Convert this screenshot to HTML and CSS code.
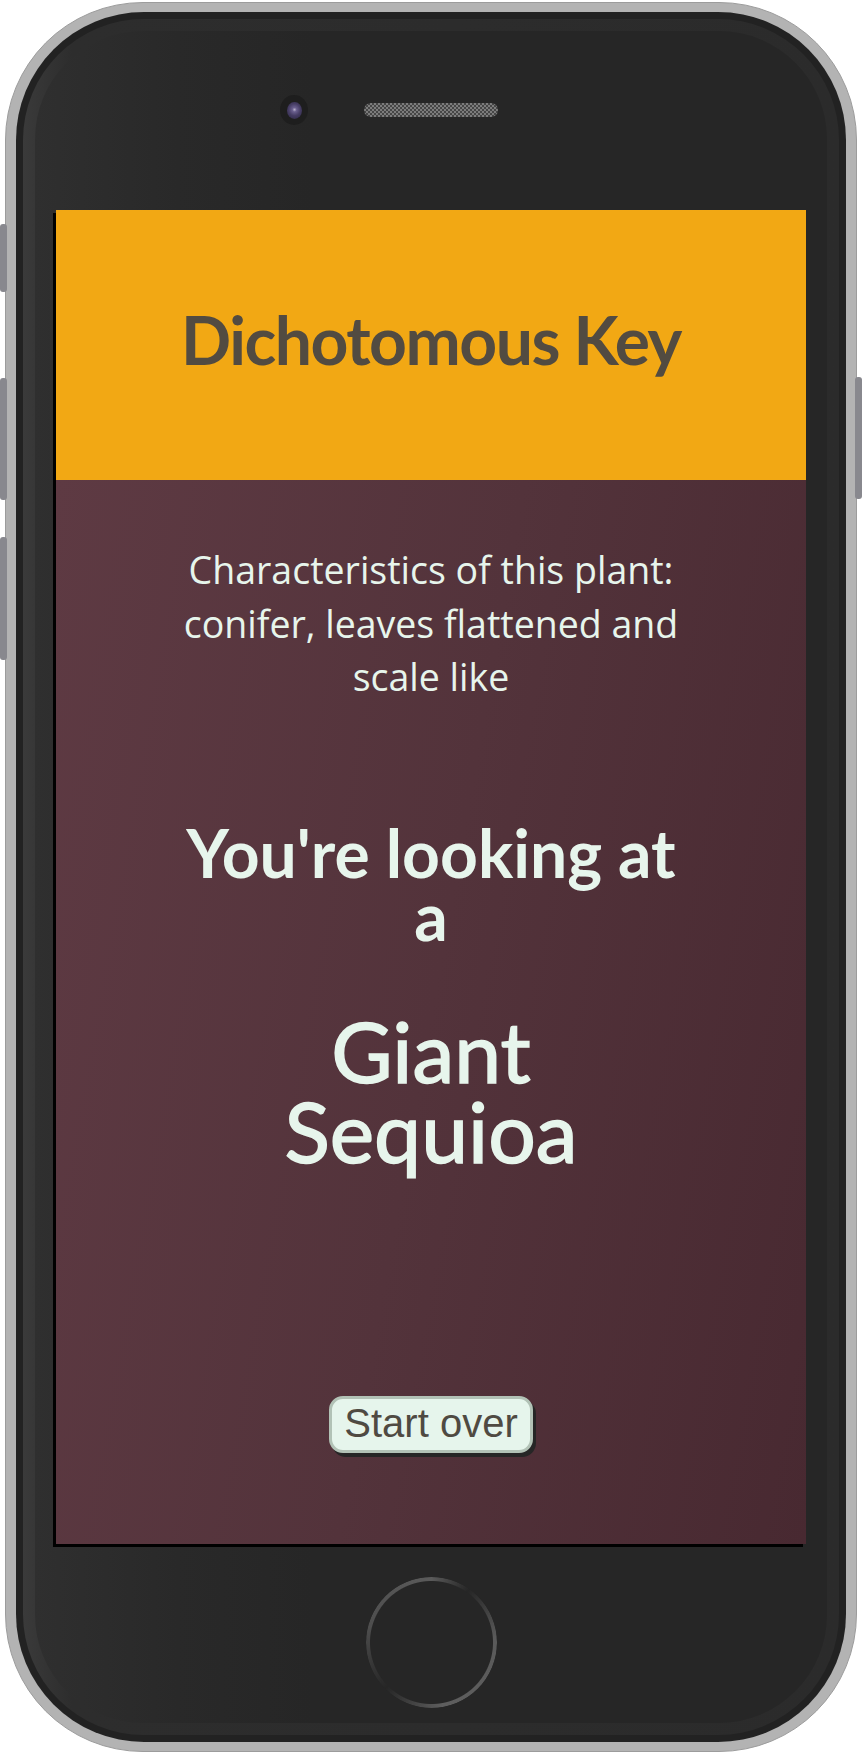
FILE: index.html
```html
<!DOCTYPE html>
<html lang="en">
<head>
<meta charset="utf-8">
<title>Dichotomous Key</title>
<link rel="stylesheet" href="styles.css">
</head>
<body>
<div class="phone">
  <span class="side-btn side-btn--mute"></span>
  <span class="side-btn side-btn--vol-up"></span>
  <span class="side-btn side-btn--vol-down"></span>
  <span class="side-btn side-btn--power"></span>
  <div class="shell">
    <div class="bezel">
      <div class="face">
        <div class="face-top">
          <span class="camera"><span class="lens"></span></span>
          <span class="speaker"></span>
        </div>
        <div class="screen">
          <header class="app-header">
            <h1 class="app-title">Dichotomous Key</h1>
          </header>
          <main class="result">
            <p class="traits">Characteristics of this plant: conifer, leaves flattened and scale like</p>
            <h2 class="lead">You're looking at a</h2>
            <h1 class="species">Giant Sequioa</h1>
            <button class="restart" type="button">Start over</button>
          </main>
        </div>
        <div class="face-bottom">
          <span class="home-btn"></span>
        </div>
      </div>
    </div>
  </div>
</div>
</body>
</html>
```

FILE: styles.css
```css
* { box-sizing: border-box; }

html, body {
  margin: 0;
  padding: 0;
  background: #ffffff;
}

body {
  width: 862px;
  height: 1754px;
  overflow: hidden;
  font-family: "Liberation Sans", Arial, sans-serif;
}

.phone {
  position: relative;
  width: 852px;
  height: 1750px;
  margin: 2px 0 0 5px;
  padding: 9px 10px;
  background: #b3b3b3;
  border: 1px solid #9c9c9c;
  border-radius: 138px;
}

.side-btn {
  position: absolute;
  width: 7px;
  background: #88888e;
  border-radius: 3px;
}
.side-btn--mute { left: -6px; top: 221px; height: 68px; }
.side-btn--vol-up { left: -6px; top: 375px; height: 122px; }
.side-btn--vol-down { left: -6px; top: 534px; height: 123px; }
.side-btn--power { right: -6px; top: 374px; height: 122px; }

.shell {
  height: 100%;
  padding: 7px;
  background: #222222;
  border-radius: 128px;
}

.bezel {
  height: 100%;
  padding: 12px;
  background: linear-gradient(to right, #3a3a3a 0, #2d2d2d 6%, #2b2b2b 100%);
  border-radius: 121px;
}

.face {
  height: 100%;
  display: flex;
  flex-direction: column;
  align-items: center;
  background: linear-gradient(to right, #2f2f2f 0, #292929 18%, #262626 35%, #262626 100%);
  border-radius: 108px;
}

.face-top {
  width: 100%;
  height: 179px;
  padding-bottom: 21px;
  display: grid;
  grid-template-columns: 1fr auto 1fr;
  align-items: center;
}

.camera {
  justify-self: end;
  margin-right: 56px;
  width: 28px;
  height: 30px;
  border-radius: 50%;
  background: #1e1e1e;
  display: flex;
  align-items: center;
  justify-content: center;
}

.lens {
  width: 15px;
  height: 17px;
  border-radius: 50%;
  background: radial-gradient(circle at 50% 45%, #b9b3cc 0, #6a5f8e 18%, #453c63 50%, #2a2540 100%);
}

.speaker {
  width: 134px;
  height: 14px;
  border-radius: 7px;
  background: repeating-conic-gradient(#8c8c8c 0 25%, #4c4c4c 0 50%) 0 0 / 4px 4px;
  opacity: 0.85;
}

.screen {
  width: 750px;
  height: 1334px;
  flex: none;
  display: flex;
  flex-direction: column;
  box-shadow: -3px 3px 0 #000000;
}

.app-header {
  height: 270px;
  flex: none;
  background: #f2a814;
  display: flex;
  align-items: center;
  justify-content: center;
  padding-bottom: 11px;
}

.app-title {
  margin: 0;
  font-family: Lato, "Open Sans", sans-serif;
  font-weight: 700;
  font-size: 66px;
  line-height: 1;
  letter-spacing: -1.5px;
  color: #524b41;
}

.result {
  flex: 1;
  display: flex;
  flex-direction: column;
  align-items: center;
  text-align: center;
  padding-top: 63px;
  color: #e7f5ec;
  background: linear-gradient(100deg, #5e3a43 0%, #53333b 50%, #482931 100%);
}

.traits {
  margin: 0;
  max-width: 530px;
  font-family: "Open Sans", "Noto Sans", sans-serif;
  font-size: 37.5px;
  line-height: 53.5px;
}

.lead {
  margin: 117px 0 0;
  max-width: 500px;
  font-family: Lato, sans-serif;
  font-weight: 700;
  font-size: 66px;
  line-height: 63px;
}

.species {
  margin: 64px 0 0;
  max-width: 480px;
  font-family: Lato, sans-serif;
  font-weight: 400;
  font-size: 84px;
  line-height: 80px;
  -webkit-text-stroke: 1.5px currentColor;
}

.restart {
  margin-top: 225px;
  padding: 2px 12px 4px;
  height: 57px;
  font-family: "Liberation Sans", Arial, sans-serif;
  font-size: 40px;
  color: #4f4a42;
  background: #e6f5ec;
  border: 3px solid #b2c2b6;
  border-radius: 14px;
  box-shadow: 3px 4px 0 #262626;
}

.face-bottom {
  width: 100%;
  height: 179px;
  padding-top: 33px;
  display: flex;
  justify-content: center;
  align-items: flex-start;
}

.home-btn {
  width: 131px;
  height: 131px;
  border-radius: 50%;
  background: conic-gradient(from 0deg, #5a5a5a 0deg, #262626 35deg, #5a5a5a 85deg, #5e5e5e 170deg, #262626 225deg, #4e4e4e 285deg, #5a5a5a 360deg);
  -webkit-mask: radial-gradient(circle, transparent 61px, #000 62px);
  mask: radial-gradient(circle, transparent 61px, #000 62px);
}
```
